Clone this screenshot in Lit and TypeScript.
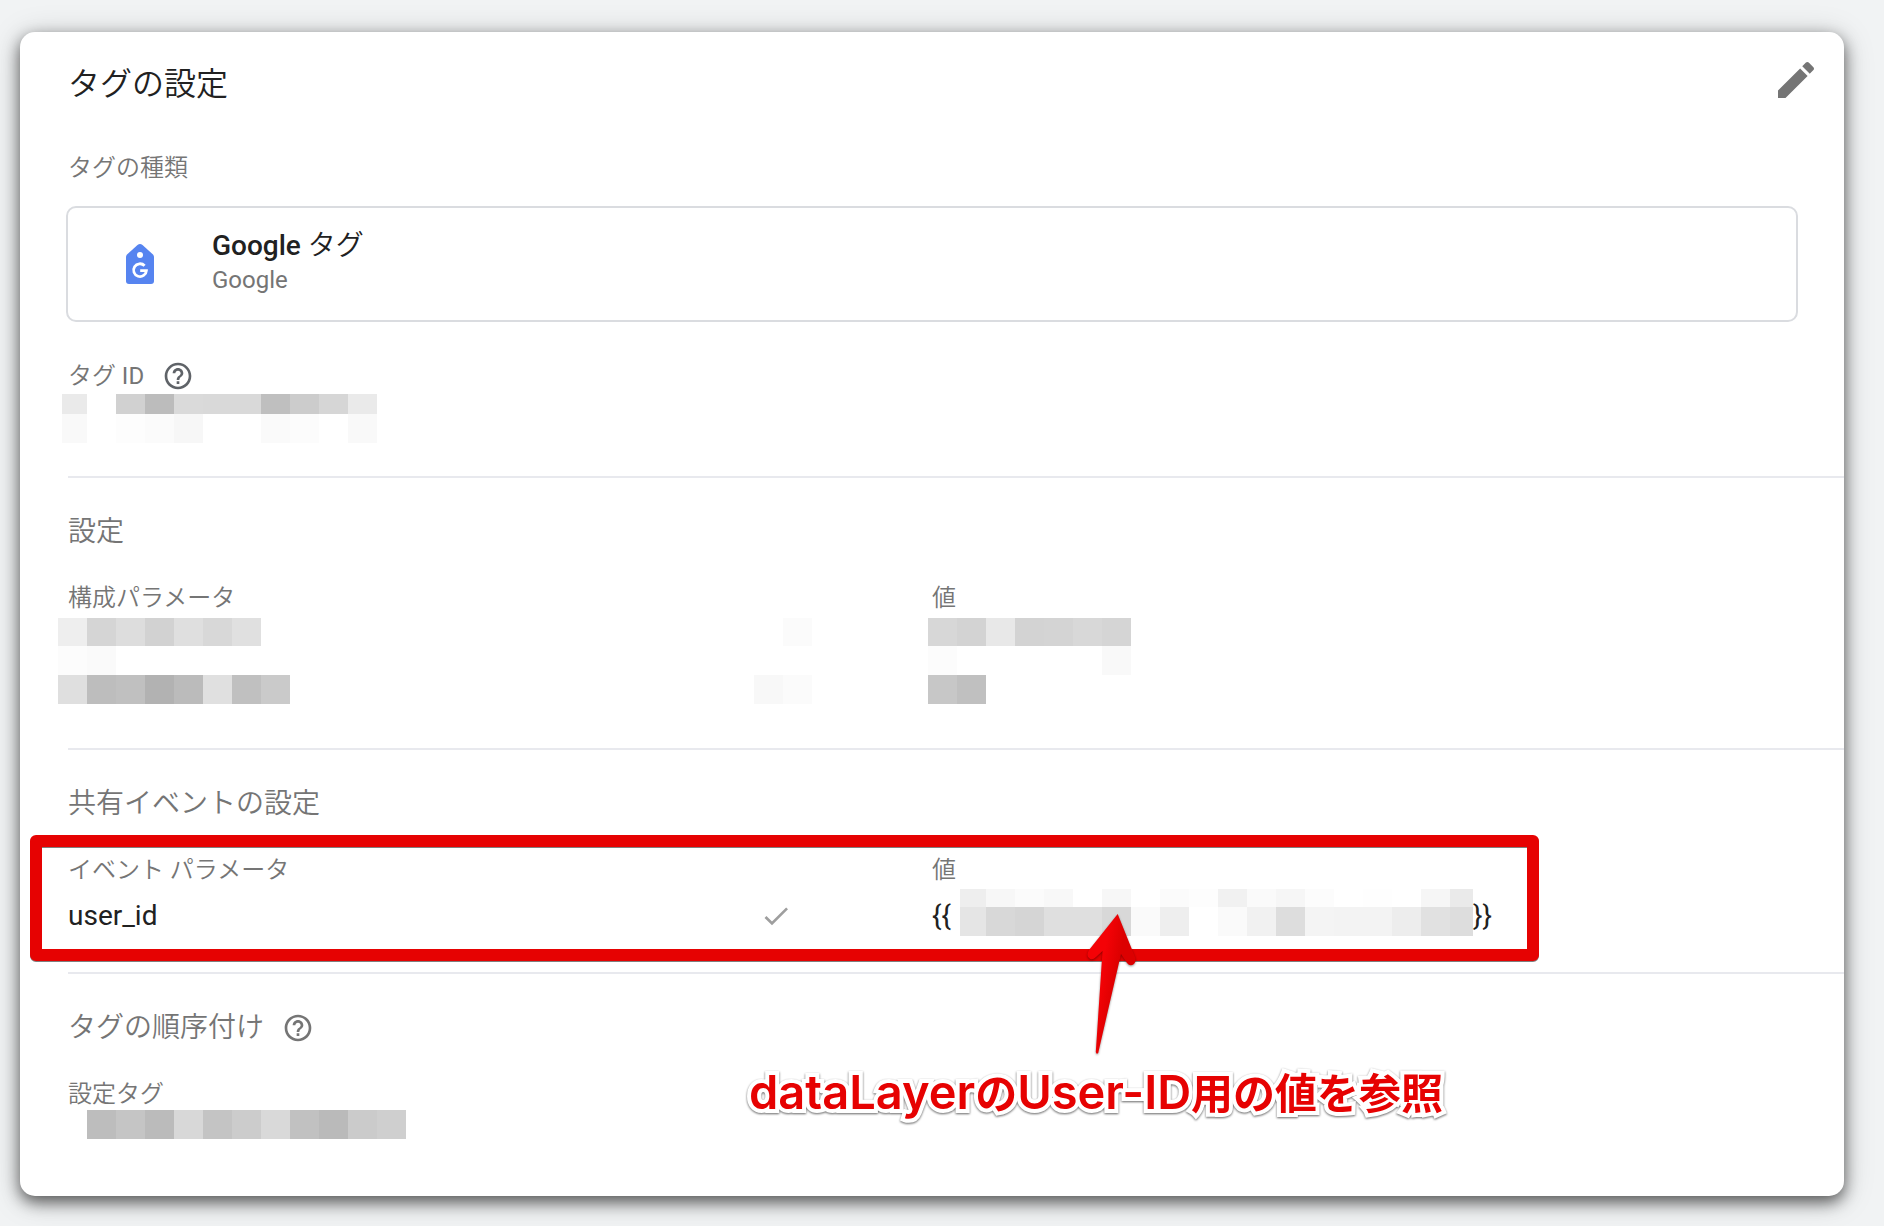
import { LitElement, html, svg, css } from "lit";
import { customElement, property } from "lit/decorators.js";

type Tile = [x: number, width: number, shade: string];
interface TileRow {
  y: number;
  height: number;
  tiles: Tile[];
}

const STEP = 29;

/** Builds a run of equally wide tiles; "--" leaves a hole. */
function run(start: number, shades: string): Tile[] {
  return shades
    .split(" ")
    .map((s, i): Tile => [start + i * STEP, STEP, s])
    .filter(([, , s]) => s !== "--");
}

/** Pixelated cover for a private value. */
@customElement("redacted-value")
export class RedactedValue extends LitElement {
  @property({ attribute: false }) rows: TileRow[] = [];

  static styles = css`
    :host {
      display: block;
    }
    .mosaic {
      display: block;
      shape-rendering: crispEdges;
    }
  `;

  render() {
    const tiles = this.rows.flatMap((r) => r.tiles.map((t) => t[0] + t[1]));
    const width = Math.max(0, ...tiles);
    const height = Math.max(0, ...this.rows.map((r) => r.y + r.height));
    return html`<svg class="mosaic" width=${width} height=${height} aria-hidden="true">
      ${this.rows.map((r) =>
        r.tiles.map(
          ([x, w, s]) =>
            svg`<rect x=${x} y=${r.y} width=${w} height=${r.height} fill=${"#" + s + s + s}></rect>`
        )
      )}
    </svg>`;
  }
}

const TAG_ID: TileRow[] = [
  { y: 0, height: 20, tiles: [[0, 25, "ea"], ...run(54, "d1 bc da d9 d9 bf cc d6 ea")] },
  { y: 20, height: 29, tiles: [[0, 25, "f9"], ...run(54, "fd fb f7 -- -- fa fc -- f9")] },
];

const CONFIG_NAMES: TileRow[] = [
  { y: 0, height: 28, tiles: [...run(0, "ee d5 dd d2 df d8 e0"), ...run(725, "fb")] },
  { y: 28, height: 29, tiles: run(0, "fc fa") },
  { y: 57, height: 29, tiles: [...run(0, "df bd c0 b2 bb e0 c0 ca"), ...run(696, "f8 fb")] },
];

const CONFIG_VALUES: TileRow[] = [
  { y: 0, height: 28, tiles: run(0, "d7 d3 e8 d3 d4 d8 d5") },
  { y: 28, height: 29, tiles: run(0, "fc -- -- -- -- -- f9") },
  { y: 57, height: 29, tiles: run(0, "c7 c0") },
];

const USER_ID_VALUE: TileRow[] = [
  {
    y: 0,
    height: 18,
    tiles: [[0, 26, "ee"], ...run(26, "f7 fb f8 -- f7 -- fb fd f1 fa f6 fc -- fe -- f6"), [490, 23, "ea"]],
  },
  {
    y: 18,
    height: 29,
    tiles: [[0, 26, "e5"], ...run(26, "d8 d5 df df d8 fa ee -- fa f1 dd f4 f3 f3 ed e1"), [490, 23, "dd"]],
  },
];

const SETUP_TAG: TileRow[] = [{ y: 0, height: 29, tiles: run(0, "bd c5 bb d8 c4 cc d9 c1 ba cb cf") }];

const helpIcon = html`<svg class="help-icon" viewBox="0 0 24 24" aria-hidden="true">
  <path
    d="M11 18h2v-2h-2v2zm1-16C6.48 2 2 6.48 2 12s4.48 10 10 10 10-4.48 10-10S17.52 2 12 2zm0 18c-4.41 0-8-3.59-8-8s3.59-8 8-8 8 3.59 8 8-3.59 8-8 8zm0-14c-2.21 0-4 1.79-4 4h2c0-1.1.9-2 2-2s2 .9 2 2c0 2-3 1.75-3 5h2c0-2.25 3-2.5 3-5 0-2.21-1.79-4-4-4z"
  ></path>
</svg>`;

@customElement("app-root")
export class AppRoot extends LitElement {
  static styles = css`
    :host {
      display: block;
      box-sizing: border-box;
      min-height: 100vh;
      padding: 32px 40px 30px 20px;
      background: #f1f3f4;
      color: #212121;
      font-family: Roboto, "Noto Sans CJK JP", sans-serif;
      overflow: hidden;
    }
    .card {
      background: #fff;
      border-radius: 15px;
      padding: 24px 0 57px 48px;
      box-shadow: 0 6px 16px rgba(0, 0, 0, 0.6), 0 4px 32px rgba(0, 0, 0, 0.18);
    }
    h2,
    h3,
    p {
      margin: 0;
      font-weight: 350;
    }
    .header {
      display: flex;
      justify-content: space-between;
      align-items: flex-start;
      padding-right: 24px;
    }
    .title {
      padding-top: 8px;
      font-size: 32px;
      line-height: 40px;
    }
    .icon-button {
      display: flex;
      padding: 0;
      border: 0;
      background: none;
      color: #757575;
      cursor: pointer;
    }
    .edit-icon {
      width: 48px;
      height: 48px;
      fill: currentColor;
    }
    .help-icon {
      width: 32px;
      height: 32px;
      fill: currentColor;
    }
    .dark {
      color: #5f6368;
    }
    .label {
      display: flex;
      align-items: center;
      gap: 18px;
      height: 32px;
      font-size: 24px;
      line-height: 32px;
      color: #757575;
    }
    .kind {
      margin-top: 48px;
    }
    .type-box {
      display: flex;
      align-items: center;
      gap: 58px;
      box-sizing: border-box;
      height: 116px;
      margin: 22px 46px 38px -2px;
      padding: 0 58px;
      border: 2px solid #dadce0;
      border-radius: 10px;
    }
    .type-text {
      padding-bottom: 4px;
    }
    .tag-logo {
      width: 28px;
      height: 40px;
    }
    .type-name {
      font-size: 28px;
      line-height: 36px;
      font-weight: 500;
    }
    .light {
      font-weight: 350;
    }
    .regular {
      font-weight: 400;
    }
    .type-vendor {
      font-size: 24px;
      line-height: 32px;
      font-weight: 400;
      color: #757575;
    }
    .tag-id {
      margin: 2px 0 33px -6px;
    }
    .section {
      border-top: 2px solid #e8e9ee;
      padding-top: 34px;
    }
    .section-title {
      display: flex;
      align-items: center;
      gap: 18px;
      height: 40px;
      margin-bottom: 30px;
      font-size: 28px;
      line-height: 40px;
      color: #757575;
    }
    .params {
      position: relative;
      margin-right: 48px;
    }
    table {
      width: 100%;
      table-layout: fixed;
      border-collapse: collapse;
    }
    th {
      height: 32px;
      padding: 0;
      text-align: left;
      font-size: 24px;
      line-height: 32px;
      font-weight: 350;
      color: #757575;
    }
    td {
      padding: 4px 0 44px;
      vertical-align: top;
      font-size: 28px;
    }
    .highlighted td {
      padding: 3px 0 29px;
    }
    .name-mosaic {
      margin-left: -10px;
    }
    .value-mosaic {
      margin-left: -4px;
    }
    .cell {
      display: flex;
      align-items: center;
      height: 54px;
      line-height: 54px;
    }
    .name-cell {
      justify-content: space-between;
      padding-right: 140px;
    }
    .check {
      width: 32px;
      height: 32px;
      fill: #9e9e9e;
    }
    .inner-mosaic {
      align-self: flex-start;
      margin-left: 9px;
    }
    .frame {
      position: absolute;
      inset: -19px 257px 11px -38px;
      border: 12px solid #e60202;
      border-radius: 6px;
      filter: drop-shadow(0 1px 0 rgba(0, 0, 0, 0.5));
      pointer-events: none;
    }
    .arrow {
      position: absolute;
      left: 1012px;
      top: 56px;
      width: 64px;
      height: 150px;
      filter: drop-shadow(0 1px 1px rgba(0, 0, 0, 0.4));
    }
    .note {
      position: absolute;
      left: 681px;
      top: 207px;
      font-family: "Noto Sans CJK JP", sans-serif;
      font-size: 42px;
      line-height: 60px;
      font-weight: 700;
      white-space: nowrap;
      color: #e60202;
      -webkit-text-stroke: 8px #fff;
      paint-order: stroke fill;
      filter: drop-shadow(0 1px 1px rgba(0, 0, 0, 0.6));
    }
    .latin {
      font-family: Inter, sans-serif;
      font-size: 47px;
      font-weight: 600;
    }
    .setup {
      margin: 0 0 0 19px;
    }
  `;

  render() {
    return html`
      <main class="card">
        <header class="header">
          <h2 class="title">タグの設定</h2>
          <button class="icon-button" type="button" aria-label="編集">
            <svg class="edit-icon" viewBox="0 0 24 24" aria-hidden="true">
              <path
                d="M3 17.25V21h3.75L17.81 9.94l-3.75-3.75L3 17.25zM20.71 7.04c.39-.39.39-1.02 0-1.41l-2.34-2.34c-.39-.39-1.02-.39-1.41 0l-1.83 1.83 3.75 3.75 1.83-1.83z"
              ></path>
            </svg>
          </button>
        </header>

        <p class="label kind light">タグの種類</p>
        <div class="type-box">
          <svg class="tag-logo" viewBox="0 0 28 40" aria-hidden="true">
            <path
              d="M11.5 1 Q14 -1 16.500 1 L27 10.500 Q28 11.500 28 13 V37 Q28 40 25 40 H3 Q0 40 0 37 V13 Q0 11.500 1 10.500 Z"
              fill="#5684f0"
            ></path>
            <circle cx="14" cy="11" r="3" fill="#fff"></circle>
            <path d="M18.600 21.700 A6.400 6.400 0 1 0 20.400 26.600 H14.200" fill="none" stroke="#fff" stroke-width="2.800"></path>
          </svg>
          <div class="type-text">
            <p class="type-name">Google <span class="light">タグ</span></p>
            <p class="type-vendor">Google</p>
          </div>
        </div>

        <div class="label">
          <span class="light">タグ <span class="regular">ID</span></span>
          <button class="icon-button dark" type="button" aria-label="タグ ID のヘルプ">${helpIcon}</button>
        </div>
        <redacted-value class="tag-id" .rows=${TAG_ID}></redacted-value>

        <section class="section">
          <h3 class="section-title">設定</h3>
          <div class="params">
            <table>
              <thead>
                <tr>
                  <th scope="col">構成パラメータ</th>
                  <th scope="col">値</th>
                </tr>
              </thead>
              <tbody>
                <tr>
                  <td><redacted-value class="name-mosaic" .rows=${CONFIG_NAMES}></redacted-value></td>
                  <td><redacted-value class="value-mosaic" .rows=${CONFIG_VALUES}></redacted-value></td>
                </tr>
              </tbody>
            </table>
          </div>
        </section>

        <section class="section">
          <h3 class="section-title">共有イベントの設定</h3>
          <div class="params highlighted">
            <table>
              <thead>
                <tr>
                  <th scope="col">イベント パラメータ</th>
                  <th scope="col">値</th>
                </tr>
              </thead>
              <tbody>
                <tr>
                  <td>
                    <div class="cell name-cell">
                      <span>user_id</span>
                      <svg class="check" viewBox="0 0 24 24" aria-hidden="true">
                        <path d="M9 16.170 4.830 12l-1.420 1.410L9 19 21 7l-1.410-1.410z"></path>
                      </svg>
                    </div>
                  </td>
                  <td>
                    <div class="cell">
                      <span>{{</span>
                      <redacted-value class="inner-mosaic" .rows=${USER_ID_VALUE}></redacted-value>
                      <span>}}</span>
                    </div>
                  </td>
                </tr>
              </tbody>
            </table>
            <div class="frame"></div>
            <svg class="arrow" viewBox="1080 910 64 150" aria-hidden="true">
              <defs>
                <linearGradient id="shade" gradientUnits="userSpaceOnUse" x1="1096" y1="965" x2="1128" y2="970">
                  <stop offset="0.2" stop-color="#f40206"></stop>
                  <stop offset="0.7" stop-color="#dc0000"></stop>
                </linearGradient>
              </defs>
              <path
                d="M1117.700 914 L1089 950 Q1086 955 1089 958 Q1092 961 1096 957 L1102.500 951 L1095.800 1052 Q1096.500 1055 1098.200 1053 L1121 954 L1127 963 Q1130 967 1134 964 Q1136.500 962 1135 957 Z"
                fill="url(#shade)"
              ></path>
            </svg>
            <div class="note"><span class="latin">dataLayer</span>の<span class="latin">User-ID</span>用の値を参照</div>
          </div>
        </section>

        <section class="section">
          <h3 class="section-title">
            <span>タグの順序付け</span>
            <button class="icon-button" type="button" aria-label="タグの順序付けのヘルプ">${helpIcon}</button>
          </h3>
          <p class="label light">設定タグ</p>
          <redacted-value class="setup" .rows=${SETUP_TAG}></redacted-value>
        </section>
      </main>
    `;
  }
}
